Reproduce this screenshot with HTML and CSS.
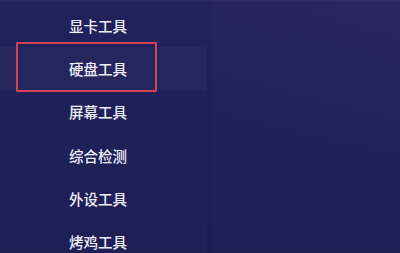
FILE: index.html
```html
<!DOCTYPE html>
<html lang="zh">
<head>
<meta charset="utf-8">
<link rel="stylesheet" href="styles.css">
</head>
<body>
<div class="screen">
  <nav class="sidebar">
    <div class="item">显卡工具</div>
    <div class="item active">硬盘工具</div>
    <div class="item">屏幕工具</div>
    <div class="item">综合检测</div>
    <div class="item">外设工具</div>
    <div class="item">烤鸡工具</div>
  </nav>
  <main class="content"></main>
  <div class="highlight"></div>
</div>
</body>
</html>
```
FILE: styles.css
```css
html, body {
  margin: 0;
  padding: 0;
}
body {
  width: 400px;
  height: 253px;
  overflow: hidden;
  background: #1f2057;
  font-family: "Noto Sans CJK SC", "Noto Sans", sans-serif;
}
.screen {
  position: relative;
  display: flex;
  width: 400px;
  height: 253px;
  overflow: hidden;
  background: linear-gradient(180deg, #2c2c64 0px, #21225b 2px, #1f2159 120px, #1d1f55 253px);
}
.sidebar {
  width: 207px;
  flex-shrink: 0;
  padding-top: 4px;
  display: flex;
  flex-direction: column;
  box-sizing: border-box;
}
.item {
  flex-shrink: 0;
  height: 43.2px;
  display: flex;
  align-items: center;
  padding-left: 69px;
  color: #eeeef8;
  font-size: 14.5px;
  font-weight: 500;
}
.item.active {
  background: rgba(255, 255, 255, 0.025);
}
.content {
  flex: 1;
  background: linear-gradient(90deg, rgba(10, 12, 60, 0.15) 0px, rgba(10, 12, 60, 0) 8px),
              linear-gradient(200deg, rgba(60, 50, 120, 0.28) 0%, rgba(30, 30, 90, 0) 60%);
}
.highlight {
  position: absolute;
  left: 16px;
  top: 42px;
  width: 141px;
  height: 50px;
  box-sizing: border-box;
  border: 2.5px solid #d04454;
  border-radius: 1px;
}
```
